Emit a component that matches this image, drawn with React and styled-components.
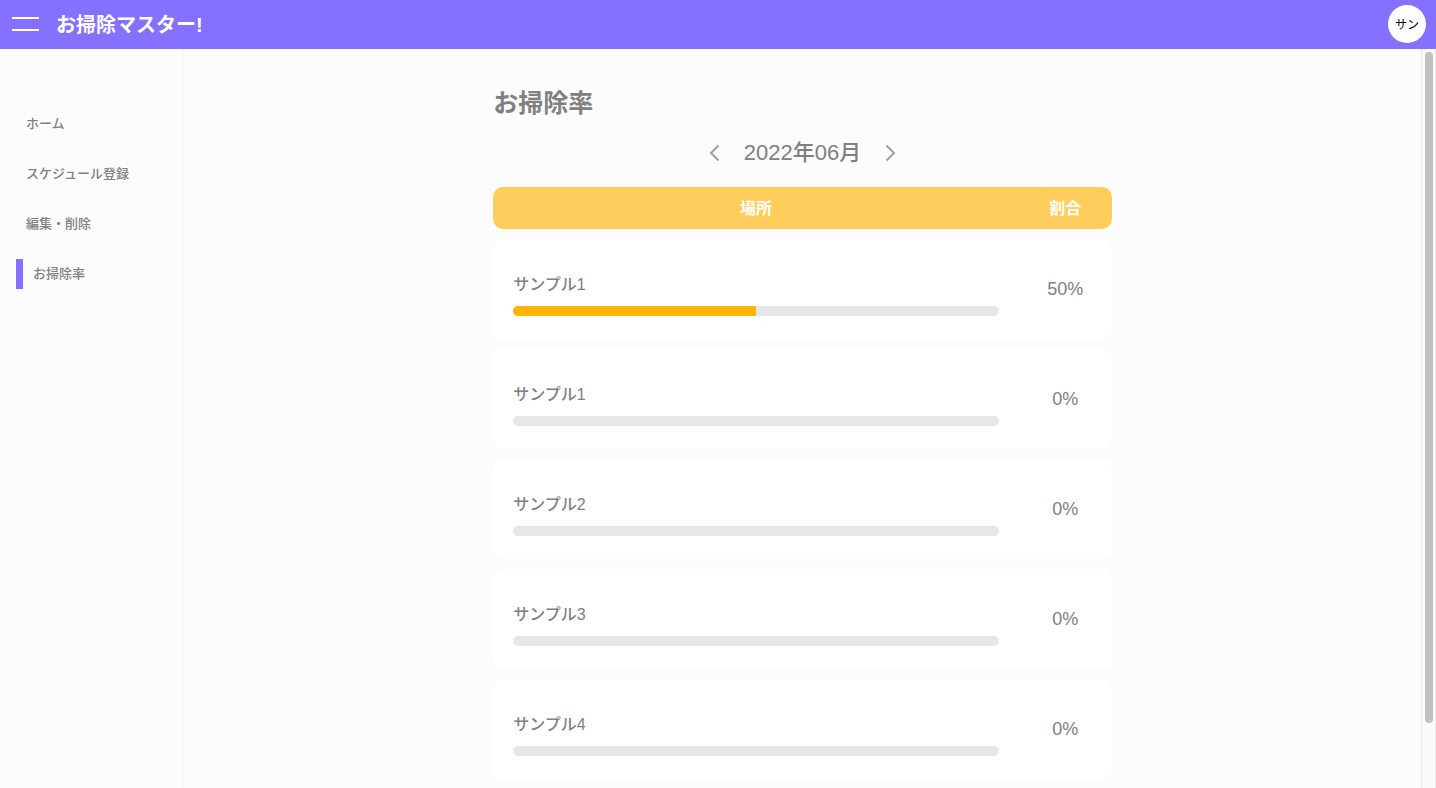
import React from "react";
import styled, { createGlobalStyle } from "styled-components";

const GlobalStyle = createGlobalStyle`
  *, *::before, *::after { box-sizing: border-box; }
  body {
    margin: 0;
    background: #fcfcfc;
    color: #808080;
    font-family: "Liberation Sans", "Noto Sans CJK JP", sans-serif;
    font-size: 16px;
    font-weight: 500;
  }
`;

const Page = styled.div`
  display: flex;
  flex-direction: column;
  height: 100vh;
  overflow: hidden;
`;

const Header = styled.header`
  display: flex;
  align-items: center;
  flex: none;
  height: 49px;
  padding: 0 10px 1px 12px;
  background: #8571ff;
`;

const MenuButton = styled.button`
  display: flex;
  flex-direction: column;
  gap: 10px;
  width: 27px;
  padding: 0;
  border: 0;
  background: none;
  cursor: pointer;
`;

const MenuLine = styled.span`
  height: 2px;
  background: #fff;
`;

const Brand = styled.p`
  flex: 1;
  margin: 0 0 0 17px;
  padding-top: 2px;
  color: #fff;
  font-size: 20px;
  font-weight: 700;
  line-height: 30px;
`;

const Avatar = styled.button`
  width: 38px;
  height: 38px;
  padding: 0 0 2px;
  border: 0;
  border-radius: 50%;
  background: #fff;
  color: #000;
  font-family: inherit;
  font-size: 12px;
  cursor: pointer;
`;

const Body = styled.div`
  display: flex;
  flex: 1;
  min-height: 0;
`;

const Sidebar = styled.nav`
  flex: none;
  width: 184px;
  padding: 60px 0 0 16px;
  border-right: 3px solid #f8f8f8;
`;

const NavList = styled.ul`
  display: flex;
  flex-direction: column;
  gap: 20px;
  margin: 0;
  padding: 0;
  list-style: none;
`;

const NavLink = styled.a`
  display: block;
  height: 30px;
  padding-left: 10px;
  border-left: ${(p) => (p.$active ? "7px solid #8571ff" : "0")};
  color: inherit;
  font-size: 13px;
  line-height: 30px;
  text-decoration: none;
`;

const Main = styled.main`
  flex: 1;
  overflow: hidden;
`;

const Content = styled.section`
  width: 50%;
  margin: 0 auto;
  padding: 36px 0 60px;
`;

const Title = styled.h1`
  margin: 0;
  font-size: 25px;
  font-weight: 700;
  line-height: 36px;
`;

const MonthPicker = styled.div`
  display: flex;
  align-items: center;
  justify-content: center;
  gap: 22px;
  height: 30px;
  margin: 17px 0 9px;
`;

const Month = styled.span`
  font-size: 22px;
  line-height: 30px;
`;

const ArrowButton = styled.button`
  display: flex;
  padding: 0;
  border: 0;
  background: none;
  color: #a0a0a0;
  cursor: pointer;
`;

const Table = styled.table`
  width: 100%;
  table-layout: fixed;
  border-collapse: separate;
  border-spacing: 0 10px;
`;

const HeadCell = styled.th`
  width: ${(p) => p.$width};
  height: 42px;
  padding: 2px 0 0;
  background: #ffcd5b;
  color: #fff;
  font-size: 16px;
  font-weight: 700;
  line-height: 24px;

  &:first-child { border-radius: 10px 0 0 10px; }
  &:last-child { border-radius: 0 10px 10px 0; }
`;

const PlaceCell = styled.td`
  height: 100px;
  padding: 10px 20px 0;
  border-radius: 10px 0 0 10px;
  background: #fff;
`;

const RateCell = styled.td`
  padding: 0;
  border-radius: 0 10px 10px 0;
  background: #fff;
  font-size: 18px;
  text-align: center;
`;

const PlaceName = styled.div`
  margin-bottom: 8px;
  line-height: 26px;
`;

const Track = styled.div`
  height: 10px;
  overflow: hidden;
  border-radius: 5px;
  background: #e7e7e7;
`;

const Fill = styled.div`
  height: 100%;
  background: #ffb400;
`;

const Scrollbar = styled.div`
  flex: none;
  width: 15px;
  padding: 3px 2px 3px 3px;
  border: solid #e8e8e8;
  border-width: 0 1px;
  background: #fafafa;
`;

const ScrollThumb = styled.div`
  width: 8px;
  height: 91.5%;
  border-radius: 4px;
  background: #c1c1c1;
`;

const navItems = ["ホーム", "スケジュール登録", "編集・削除", "お掃除率"];

const places = [
  { name: "サンプル1", rate: 50 },
  { name: "サンプル1", rate: 0 },
  { name: "サンプル2", rate: 0 },
  { name: "サンプル3", rate: 0 },
  { name: "サンプル4", rate: 0 },
];

function Arrow({ label, d }) {
  return (
    <ArrowButton type="button" aria-label={label}>
      <svg width="16" height="18" viewBox="0 0 16 18" fill="none" stroke="currentColor" strokeWidth="2">
        <path d={d} />
      </svg>
    </ArrowButton>
  );
}

export default function App() {
  return (
    <Page>
      <GlobalStyle />
      <Header>
        <MenuButton type="button" aria-label="メニュー">
          <MenuLine />
          <MenuLine />
        </MenuButton>
        <Brand>お掃除マスター!</Brand>
        <Avatar type="button">サン</Avatar>
      </Header>
      <Body>
        <Sidebar>
          <NavList>
            {navItems.map((item) => (
              <li key={item}>
                <NavLink href="#" $active={item === "お掃除率"}>{item}</NavLink>
              </li>
            ))}
          </NavList>
        </Sidebar>
        <Main>
          <Content>
            <Title>お掃除率</Title>
            <MonthPicker>
              <Arrow label="前の月" d="M12.5 1.5 L5 9 L12.5 16.5" />
              <Month>2022年06月</Month>
              <Arrow label="次の月" d="M3.5 1.5 L11 9 L3.5 16.5" />
            </MonthPicker>
            <Table>
              <thead>
                <tr>
                  <HeadCell $width="85%">場所</HeadCell>
                  <HeadCell $width="15%">割合</HeadCell>
                </tr>
              </thead>
              <tbody>
                {places.map((place, i) => (
                  <tr key={i}>
                    <PlaceCell>
                      <PlaceName>{place.name}</PlaceName>
                      <Track role="progressbar" aria-label={place.name} aria-valuenow={place.rate}>
                        <Fill style={{ width: `${place.rate}%` }} />
                      </Track>
                    </PlaceCell>
                    <RateCell>{place.rate}%</RateCell>
                  </tr>
                ))}
              </tbody>
            </Table>
          </Content>
        </Main>
        <Scrollbar aria-hidden="true">
          <ScrollThumb />
        </Scrollbar>
      </Body>
    </Page>
  );
}
